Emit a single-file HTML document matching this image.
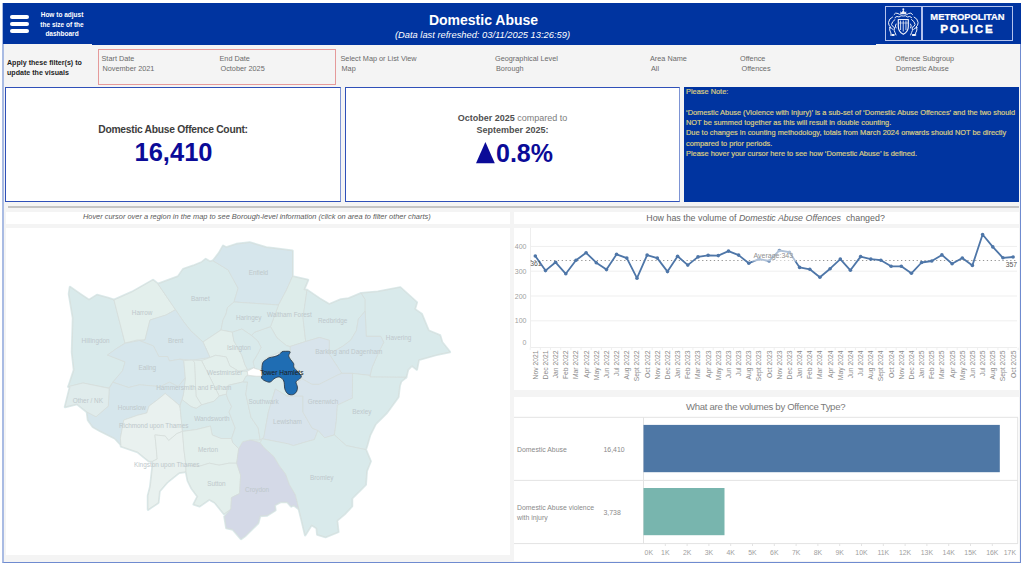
<!DOCTYPE html>
<html><head><meta charset="utf-8">
<style>
*{margin:0;padding:0;box-sizing:border-box}
html,body{width:1023px;height:565px;overflow:hidden;background:#fff;font-family:"Liberation Sans",sans-serif}
.a{position:absolute}
#frame{left:2px;top:3px;width:1019px;height:560.2px;background:#f4f4f4;border-left:2px solid #a9bbe3;border-right:1px solid #6f8bd0;border-bottom:1.5px solid #6f8bd0}
#hdr{left:3px;top:3px;width:1018px;height:41px;background:#0034a0}
.w{color:#fff}
.t{white-space:nowrap}
.fl{font-size:7.3px;color:#6b6b6b}
.nt{left:686px;font-size:7.4px;color:#dacd84;line-height:10px;-webkit-text-stroke:0.2px #dacd84}
.box{background:#fff;border:1px solid #2f50b8;border-right-color:#7d94d4}
</style></head><body>
<div class="a" id="frame"></div>
<div class="a" id="hdr"></div>
<div class="a" style="left:91.5px;top:43.9px;width:784px;height:0.9px;background:#0034a0"></div>
<!-- hamburger -->
<div class="a" style="left:10px;top:15px;width:19px;height:3.6px;background:#fff;border-radius:2px"></div>
<div class="a" style="left:10px;top:22px;width:19px;height:3.6px;background:#fff;border-radius:2px"></div>
<div class="a" style="left:10px;top:29.3px;width:19px;height:3.6px;background:#fff;border-radius:2px"></div>
<div class="a w" style="left:36px;top:10.3px;width:52px;font-size:6.5px;font-weight:bold;line-height:9.5px;text-align:center">How to adjust<br>the size of the<br>dashboard</div>
<div class="a w t" style="left:383.5px;top:12px;width:200px;text-align:center;font-size:14px;font-weight:bold">Domestic Abuse</div>
<div class="a w t" style="left:382.5px;top:30.3px;width:200px;text-align:center;font-size:9.33px;font-style:italic">(Data last refreshed: 03/11/2025 13:26:59)</div>
<!-- logo -->
<div class="a" style="left:885px;top:6px;width:36.5px;height:34.5px;border:1.3px solid #b4c2ec"></div>
<div class="a" style="left:921.5px;top:6px;width:91.5px;height:34.5px;border:1.3px solid #b4c2ec"></div>
<svg class="a" style="left:880px;top:0" width="45" height="45" viewBox="880 0 45 45">
<g fill="none" stroke="#eef1fa" stroke-width="1" stroke-linecap="round" stroke-linejoin="round">
<path d="M894,14.5 q1.5,-2.5 4,-1 q1,1.5 3,0.5 M912.6,14.5 q-1.5,-2.5 -4,-1 q-1,1.5 -3,0.5"/>
<path d="M895,17.5 q2,-2 4,-0.5 q2,-2 4.3,-1 q2.3,-1 4.3,1 q2,-1.5 4,0.5"/>
<path d="M898.3,19.5 h10 v7 q0,5.2 -5,7.8 q-5,-2.6 -5,-7.8 z" stroke-width="1.2"/>
<path d="M892.5,17 q-3.5,1.5 -4,5.5 q0,3 2,4.5 q-1.5,2 -0.5,4 q1.5,1.5 1,4.5"/>
<path d="M895,19.5 q-3,2 -3.5,5 q1,2.5 3,3 q-1,3 0.5,5 l1,2.5"/>
<path d="M889.5,27.5 q2.5,0 3.5,2 M896,24 q-1.5,2 0,4"/>
<path d="M914.1,17 q3.5,1.5 4,5.5 q0,3 -2,4.5 q1.5,2 0.5,4 q-1.5,1.5 -1,4.5"/>
<path d="M911.6,19.5 q3,2 3.5,5 q-1,2.5 -3,3 q1,3 -0.5,5 l-1,2.5"/>
<path d="M917.1,27.5 q-2.5,0 -3.5,2 M910.6,24 q1.5,2 0,4"/>
</g>
<g fill="#eef1fa">
<path d="M900.6,14.2 l-0.3,-3 l1.4,1.2 l1.6,-2.8 l1.6,2.8 l1.4,-1.2 l-0.3,3 z"/>
<circle cx="903.3" cy="9.3" r="1"/>
<rect x="900" y="20.5" width="1.1" height="9.5" fill-opacity="0.8"/><rect x="902.7" y="20.5" width="1.1" height="11" fill-opacity="0.8"/><rect x="905.4" y="20.5" width="1.1" height="9.5" fill-opacity="0.8"/>
<rect x="898.5" y="22.5" width="9.6" height="1" fill-opacity="0.6"/>
<rect x="891.5" y="34" width="3" height="2"/><rect x="912.1" y="34" width="3" height="2"/>
</g></svg>
<div class="a w t" style="left:923px;top:11px;width:89px;text-align:center;font-size:9.4px;font-weight:bold;-webkit-text-stroke:0.2px #fff">METROPOLITAN</div>
<div class="a w t" style="left:922px;top:21.8px;width:89px;text-align:center;font-size:11.6px;font-weight:bold;letter-spacing:1.9px;text-indent:1.9px;-webkit-text-stroke:0.35px #fff">POLICE</div>

<!-- filters -->
<div class="a t" style="left:7px;top:58.2px;font-size:7.1px;font-weight:bold;line-height:10.2px;color:#1e1e1e">Apply these filter(s) to<br>update the visuals</div>
<div class="a" style="left:98px;top:49px;width:238px;height:36px;border:1px solid #e59a9a"></div>
<div class="a fl t" style="left:101.5px;top:54px">Start Date</div>
<div class="a fl t" style="left:102.5px;top:64px">November 2021</div>
<div class="a fl t" style="left:219.5px;top:54px">End Date</div>
<div class="a fl t" style="left:220.5px;top:64px">October 2025</div>
<div class="a fl t" style="left:340.5px;top:54px">Select Map or List View</div>
<div class="a fl t" style="left:341.5px;top:64px">Map</div>
<div class="a fl t" style="left:495px;top:54px">Geographical Level</div>
<div class="a fl t" style="left:496px;top:64px">Borough</div>
<div class="a fl t" style="left:650px;top:54px">Area Name</div>
<div class="a fl t" style="left:651px;top:64px">All</div>
<div class="a fl t" style="left:740px;top:54px">Offence</div>
<div class="a fl t" style="left:741.5px;top:64px">Offences</div>
<div class="a fl t" style="left:895px;top:54px">Offence Subgroup</div>
<div class="a fl t" style="left:896px;top:64px">Domestic Abuse</div>

<!-- KPI boxes -->
<div class="a box" style="left:5px;top:87px;width:336px;height:115px"></div>
<div class="a box" style="left:345px;top:87px;width:335px;height:115px"></div>
<div class="a" style="left:684px;top:87px;width:335px;height:115px;background:#0034a0"></div>

<div class="a t" style="left:5px;top:123.5px;width:336px;text-align:center;font-size:10.3px;font-weight:bold;letter-spacing:-0.28px;color:#3d3d3d">Domestic Abuse Offence Count:</div>
<div class="a t" style="left:5.5px;top:137.5px;width:336px;text-align:center;font-size:25.5px;font-weight:bold;color:#0b0b98">16,410</div>

<div class="a t" style="left:345px;top:111.7px;width:335px;text-align:center;font-size:9px;color:#505050;line-height:12.6px"><b>October 2025</b> <span style="color:#7c7c7c">compared to</span><br><b>September 2025:</b></div>
<svg class="a" style="left:0;top:0" width="600" height="200"><polygon points="476,163.3 485.4,142 494.8,163.3" fill="#0b0b98"/></svg><div class="a t" style="left:496px;top:138.5px;font-size:25px;font-weight:bold;color:#0b0b98">0.8%</div>

<div class="a t nt" style="top:87.30px">Please Note:</div>
<div class="a t nt" style="top:107.80px">‘Domestic Abuse (Violence with Injury)’ is a sub-set of ‘Domestic Abuse Offences’ and the two should</div>
<div class="a t nt" style="top:118.05px">NOT be summed together as this will result in double counting.</div>
<div class="a t nt" style="top:128.30px">Due to changes in counting methodology, totals from March 2024 onwards should NOT be directly</div>
<div class="a t nt" style="top:138.55px">compared to prior periods.</div>
<div class="a t nt" style="top:148.80px">Please hover your cursor here to see how ‘Domestic Abuse’ is defined.</div>

<!-- separator -->
<div class="a" style="left:8px;top:206px;width:1011px;height:1.5px;background:#c4c4c4"></div>

<!-- map panel -->
<div class="a" style="left:6px;top:212px;width:504px;height:12px;background:#fff"></div>
<div class="a t" style="left:4.8px;top:212.3px;width:504px;text-align:center;font-size:7.43px;font-style:italic;color:#5a5a5a">Hover cursor over a region in the map to see Borough-level information (click on area to filter other charts)</div>
<div class="a" style="left:6px;top:228px;width:504px;height:327px;background:#fff"></div>

<!-- line chart panel -->
<div class="a" style="left:514px;top:212px;width:505px;height:12px;background:#fff"></div>
<div class="a t" style="left:646.3px;top:213px;font-size:8.87px;color:#666">How has the volume of <i>Domestic Abuse Offences</i>&nbsp; changed?</div>
<div class="a" style="left:514px;top:228px;width:505px;height:162.3px;background:#fff"></div>

<!-- bar chart panel -->
<div class="a" style="left:514px;top:397px;width:505px;height:163.5px;background:#fff"></div>

<svg class="a" style="left:0;top:0" width="1023" height="565" viewBox="0 0 1023 565" font-family="Liberation Sans, sans-serif"><polygon points="70.0,287.0 80.0,294.0 89.0,300.0 97.0,295.0 108.0,298.0 114.0,300.0 125.0,343.0 116.0,349.0 107.5,355.0 125.0,362.0 122.5,371.0 113.0,382.0 109.0,388.0 83.0,383.0 68.5,386.6 74.0,370.0 72.0,352.0 73.0,318.0 69.0,294.0" fill="#dbeaeb" stroke="#dbeaeb" stroke-width="2.5" stroke-linejoin="round"/><polygon points="114.0,300.0 132.0,292.0 153.0,280.0 158.0,284.0 175.5,309.7 166.0,315.0 150.0,320.0 145.0,340.0 137.0,340.0 125.0,343.0" fill="#dbeaeb" stroke="#dbeaeb" stroke-width="2.5" stroke-linejoin="round"/><polygon points="158.0,284.0 178.2,276.5 183.2,269.1 193.2,265.8 201.5,262.4 205.6,259.1 209.8,261.6 213.1,260.8 228.1,269.9 238.1,288.2 234.0,302.0 227.5,307.5 226.0,314.0 223.0,320.0 221.0,330.0 203.0,342.0 191.0,331.0 183.5,321.6 175.5,309.7" fill="#dbeaeb" stroke="#dbeaeb" stroke-width="2.5" stroke-linejoin="round"/><polygon points="213.1,260.8 219.0,253.0 223.1,245.8 226.4,247.5 236.4,244.1 249.7,242.5 266.3,247.5 273.0,248.3 292.5,250.8 292.5,276.5 286.5,290.0 278.5,305.0 234.0,302.0 238.1,288.2 228.1,269.9" fill="#dbeaeb" stroke="#dbeaeb" stroke-width="2.5" stroke-linejoin="round"/><polygon points="292.5,276.5 308.0,280.0 303.9,289.7 307.0,290.0 303.0,317.6 305.7,341.5 290.0,346.5 286.5,345.7 276.9,337.8 270.5,326.6 278.5,305.0 286.5,290.0" fill="#dbeaeb" stroke="#dbeaeb" stroke-width="2.5" stroke-linejoin="round"/><polygon points="307.0,290.0 319.5,298.5 329.2,304.3 340.9,299.5 348.7,298.5 361.3,293.2 365.2,299.5 365.2,311.1 358.4,318.9 356.4,330.6 350.6,340.3 342.8,346.2 329.2,354.0 329.2,340.3 319.5,337.4 305.7,341.5 303.0,317.6" fill="#dbeaeb" stroke="#dbeaeb" stroke-width="2.5" stroke-linejoin="round"/><polygon points="361.3,293.2 377.9,291.7 400.2,287.4 416.8,302.4 414.8,309.2 421.7,314.1 428.5,330.6 440.1,335.5 442.1,342.3 449.9,352.0 440.1,354.0 436.3,354.9 418.7,359.8 416.8,369.5 411.9,365.6 408.0,369.5 406.1,377.3 370.1,377.0 370.1,375.4 372.0,367.6 377.9,354.0 383.7,342.3 380.8,336.4 366.2,336.4 365.2,311.1 365.2,299.5" fill="#dbeaeb" stroke="#dbeaeb" stroke-width="2.5" stroke-linejoin="round"/><polygon points="329.2,354.0 342.8,346.2 350.6,340.3 356.4,330.6 358.4,318.9 365.2,311.1 366.2,336.4 380.8,336.4 383.7,342.3 377.9,354.0 372.0,367.6 370.1,375.4 352.6,373.4 341.8,373.4" fill="#dbeaeb" stroke="#dbeaeb" stroke-width="2.5" stroke-linejoin="round"/><polygon points="290.0,346.5 305.7,341.5 319.5,337.4 329.2,340.3 329.2,354.0 341.8,373.4 337.4,375.2 319.0,384.4 312.0,384.4 301.8,378.7 301.8,372.9 293.7,366.0 292.6,360.3 289.1,356.8 290.3,351.5" fill="#dbeaeb" stroke="#dbeaeb" stroke-width="2.5" stroke-linejoin="round"/><polygon points="270.5,326.6 276.9,337.8 286.5,345.7 290.0,346.5 290.3,351.5 282.2,351.1 268.4,356.8 261.5,361.4 261.5,368.5 259.8,370.2 252.9,367.7 253.0,361.7 257.8,353.7 261.0,347.3 257.8,341.0 251.4,335.4 254.6,332.2" fill="#dbeaeb" stroke="#dbeaeb" stroke-width="2.5" stroke-linejoin="round"/><polygon points="234.0,302.0 278.5,305.0 270.5,326.6 254.6,332.2 251.4,335.4 241.9,329.0 232.3,332.2 221.0,330.0 223.0,320.0 226.0,314.0 227.5,307.5" fill="#dbeaeb" stroke="#dbeaeb" stroke-width="2.5" stroke-linejoin="round"/><polygon points="203.0,342.0 221.0,330.0 232.3,332.2 233.9,341.0 241.9,355.3 245.0,364.8 247.5,369.6 238.7,371.2 229.9,366.0 226.3,357.0 215.7,355.3 210.0,357.5" fill="#dbeaeb" stroke="#dbeaeb" stroke-width="2.5" stroke-linejoin="round"/><polygon points="232.3,332.2 241.9,329.0 251.4,335.4 257.8,341.0 261.0,347.3 257.8,353.7 253.0,361.7 254.6,368.0 252.9,367.7 247.5,369.6 245.0,364.8 241.9,355.3 233.9,341.0" fill="#dbeaeb" stroke="#dbeaeb" stroke-width="2.5" stroke-linejoin="round"/><polygon points="175.5,309.7 183.5,321.6 191.0,331.0 203.0,342.0 210.0,357.5 192.4,360.1 180.0,359.2 169.4,361.0 167.6,356.5 158.8,356.5 153.4,345.9 139.3,340.6 145.0,340.0 150.0,320.0 166.0,315.0" fill="#dbeaeb" stroke="#dbeaeb" stroke-width="2.5" stroke-linejoin="round"/><polygon points="107.5,355.0 116.3,348.6 125.1,343.3 139.3,340.6 153.4,345.9 158.8,356.5 167.6,356.5 169.4,361.0 180.0,359.2 183.8,360.6 185.3,377.8 178.2,386.6 169.4,382.2 160.5,386.6 139.3,384.8 128.7,387.5 112.8,382.2 122.5,370.7 125.1,361.8" fill="#dbeaeb" stroke="#dbeaeb" stroke-width="2.5" stroke-linejoin="round"/><polygon points="201.5,360.6 210.0,357.5 215.7,355.3 226.3,357.0 229.9,366.0 238.7,371.2 247.3,371.3 247.8,375.2 245.8,376.5 243.1,381.9 228.1,385.4 226.3,394.2 219.2,396.0 212.2,381.9" fill="#dbeaeb" stroke="#dbeaeb" stroke-width="2.5" stroke-linejoin="round"/><polygon points="192.4,360.1 201.5,360.6 212.2,381.9 219.2,396.0 214.0,401.3 201.5,404.9 196.0,396.0 194.5,362.4" fill="#dbeaeb" stroke="#dbeaeb" stroke-width="2.5" stroke-linejoin="round"/><polygon points="183.8,360.6 192.4,360.1 194.5,362.4 196.0,396.0 201.5,404.9 196.2,408.4 191.0,406.6 182.0,399.6 183.5,393.7 185.3,377.8" fill="#dbeaeb" stroke="#dbeaeb" stroke-width="2.5" stroke-linejoin="round"/><polygon points="112.8,382.2 128.7,387.5 139.3,384.8 160.5,386.6 169.4,382.2 178.2,386.6 185.3,377.8 183.5,393.7 182.0,399.6 180.3,404.9 179.0,405.0 172.1,399.2 165.2,393.5 158.3,399.2 149.1,406.1 146.8,413.0 137.6,415.3 123.8,420.0 120.4,438.3 121.0,445.0 115.0,438.5 108.0,435.0 100.0,431.0 93.0,427.0 88.0,420.0 87.0,412.0 96.0,416.7 108.3,406.1 109.2,388.4" fill="#dbeaeb" stroke="#dbeaeb" stroke-width="2.5" stroke-linejoin="round"/><polygon points="68.5,386.6 83.0,383.0 109.2,388.4 108.3,406.1 96.0,416.7 87.0,412.0 77.0,404.0 65.0,407.0 70.0,387.0" fill="#dbeaeb" stroke="#dbeaeb" stroke-width="2.5" stroke-linejoin="round"/><polygon points="165.2,393.5 172.1,399.2 179.0,405.0 180.2,408.4 182.5,431.4 176.7,433.7 168.7,440.6 165.2,436.0 154.9,434.9 156.0,445.2 157.2,459.0 152.6,461.3 149.0,461.3 137.6,452.0 121.0,446.4 120.4,438.3 123.8,420.0 137.6,415.3 146.8,413.0 149.1,406.1 158.3,399.2" fill="#dbeaeb" stroke="#dbeaeb" stroke-width="2.5" stroke-linejoin="round"/><polygon points="154.9,434.9 165.2,436.0 168.7,440.6 176.7,433.7 182.5,431.4 183.9,449.6 185.9,465.2 186.0,471.7 179.0,472.8 167.5,482.0 159.5,491.2 158.3,502.7 148.0,509.6 148.0,495.8 150.3,486.6 152.6,466.0 152.6,461.3 157.2,459.0 156.0,445.2" fill="#dbeaeb" stroke="#dbeaeb" stroke-width="2.5" stroke-linejoin="round"/><polygon points="180.3,404.9 182.0,399.6 191.0,406.6 196.2,408.4 201.5,404.9 214.0,401.3 219.2,396.0 226.3,394.2 228.1,399.6 231.6,406.6 229.0,412.0 235.2,427.9 231.6,438.5 221.0,438.5 212.2,435.0 210.4,426.1 196.2,429.6 182.5,431.4 180.2,408.4" fill="#dbeaeb" stroke="#dbeaeb" stroke-width="2.5" stroke-linejoin="round"/><polygon points="182.5,431.4 196.2,429.6 210.4,426.1 212.2,435.0 221.0,438.5 231.6,438.5 232.8,442.7 238.7,448.6 236.7,463.2 228.9,463.2 219.1,465.2 209.3,463.2 199.6,466.2 185.9,465.2 183.9,449.6" fill="#dbeaeb" stroke="#dbeaeb" stroke-width="2.5" stroke-linejoin="round"/><polygon points="185.9,465.2 199.6,466.2 209.3,463.2 219.1,465.2 228.9,463.2 236.7,463.2 240.6,475.0 239.6,493.5 231.5,497.6 230.9,509.1 224.0,514.0 215.0,502.7 209.3,499.4 199.6,506.2 193.7,504.3 197.6,496.5 191.7,488.6 187.8,480.8 186.0,471.7" fill="#dbeaeb" stroke="#dbeaeb" stroke-width="2.5" stroke-linejoin="round"/><polygon points="238.7,448.6 242.6,441.7 250.4,439.8 260.2,442.7 264.1,447.6 273.8,456.4 279.7,466.2 285.6,474.0 289.5,484.7 295.3,494.5 298.9,509.1 293.8,505.2 291.2,506.5 287.4,502.1 280.4,502.1 274.7,505.2 275.4,510.3 267.1,515.4 260.1,516.0 258.2,523.0 245.5,535.7 241.0,538.9 232.8,529.4 226.4,528.1 224.5,516.7 230.9,509.1 231.5,497.6 239.6,493.5 240.6,475.0 236.7,463.2" fill="#dbeaeb" stroke="#dbeaeb" stroke-width="2.5" stroke-linejoin="round"/><polygon points="243.1,381.9 247.6,381.9 245.8,394.2 251.0,417.3 258.2,427.9 260.2,440.0 250.4,439.8 242.6,441.7 238.7,448.6 232.8,442.7 231.6,438.5 235.2,427.9 229.0,412.0 231.6,406.6 228.1,399.6 226.3,394.2 228.1,385.4" fill="#dbeaeb" stroke="#dbeaeb" stroke-width="2.5" stroke-linejoin="round"/><polygon points="247.6,375.7 261.7,376.5 263.8,379.4 270.0,377.0 280.0,375.5 284.5,383.3 285.7,390.2 289.1,394.1 286.8,396.0 275.3,389.0 268.4,412.0 263.8,437.3 260.2,440.0 258.2,427.9 251.0,417.3 245.8,394.2 247.6,381.9 243.1,381.9 245.8,376.5" fill="#dbeaeb" stroke="#dbeaeb" stroke-width="2.5" stroke-linejoin="round"/><polygon points="275.3,389.0 286.8,396.0 302.9,396.0 302.9,412.0 312.1,428.1 317.9,430.4 314.4,439.6 309.0,441.0 293.4,445.6 287.5,443.7 262.1,438.8 263.8,437.3 268.4,412.0" fill="#dbeaeb" stroke="#dbeaeb" stroke-width="2.5" stroke-linejoin="round"/><polygon points="297.2,383.3 301.8,378.7 312.1,384.4 319.0,384.4 337.4,375.2 341.8,373.4 352.6,373.4 352.4,398.2 337.4,405.1 336.3,421.2 334.4,434.9 324.7,437.8 317.9,430.4 312.1,428.1 302.9,412.0 302.9,396.0 286.8,396.0 289.1,394.1 294.9,394.1 298.3,390.2" fill="#dbeaeb" stroke="#dbeaeb" stroke-width="2.5" stroke-linejoin="round"/><polygon points="352.6,373.4 370.1,375.4 370.1,377.0 406.1,377.3 401.2,381.2 399.7,385.6 398.3,396.9 387.0,412.5 375.7,423.8 370.0,435.1 367.2,445.0 365.7,449.6 346.2,445.6 334.4,434.9 336.3,421.2 337.4,405.1 352.4,398.2" fill="#dbeaeb" stroke="#dbeaeb" stroke-width="2.5" stroke-linejoin="round"/><polygon points="262.1,438.8 287.5,443.7 293.4,445.6 309.0,441.0 314.4,439.6 317.9,430.4 324.7,437.8 334.4,434.9 346.2,445.6 365.7,449.6 370.6,461.3 366.7,471.1 365.7,484.7 352.0,498.4 352.0,506.2 344.6,514.1 337.0,520.5 338.3,531.9 325.5,537.0 317.3,534.5 316.7,528.1 311.6,524.9 305.2,535.1 301.4,519.2 298.9,509.1 295.3,494.5 289.5,484.7 285.6,474.0 279.7,466.2 273.8,456.4 264.1,447.6 260.2,442.7" fill="#dbeaeb" stroke="#dbeaeb" stroke-width="2.5" stroke-linejoin="round"/><polygon points="70.0,287.0 80.0,294.0 89.0,300.0 97.0,295.0 108.0,298.0 114.0,300.0 125.0,343.0 116.0,349.0 107.5,355.0 125.0,362.0 122.5,371.0 113.0,382.0 109.0,388.0 83.0,383.0 68.5,386.6 74.0,370.0 72.0,352.0 73.0,318.0 69.0,294.0" fill="#d9eaeb" stroke="#d6dcda" stroke-width="0.7" stroke-linejoin="round"/><polygon points="114.0,300.0 132.0,292.0 153.0,280.0 158.0,284.0 175.5,309.7 166.0,315.0 150.0,320.0 145.0,340.0 137.0,340.0 125.0,343.0" fill="#e3efec" stroke="#d6dcda" stroke-width="0.7" stroke-linejoin="round"/><polygon points="158.0,284.0 178.2,276.5 183.2,269.1 193.2,265.8 201.5,262.4 205.6,259.1 209.8,261.6 213.1,260.8 228.1,269.9 238.1,288.2 234.0,302.0 227.5,307.5 226.0,314.0 223.0,320.0 221.0,330.0 203.0,342.0 191.0,331.0 183.5,321.6 175.5,309.7" fill="#d9eaeb" stroke="#d6dcda" stroke-width="0.7" stroke-linejoin="round"/><polygon points="213.1,260.8 219.0,253.0 223.1,245.8 226.4,247.5 236.4,244.1 249.7,242.5 266.3,247.5 273.0,248.3 292.5,250.8 292.5,276.5 286.5,290.0 278.5,305.0 234.0,302.0 238.1,288.2 228.1,269.9" fill="#d6e6ec" stroke="#d6dcda" stroke-width="0.7" stroke-linejoin="round"/><polygon points="292.5,276.5 308.0,280.0 303.9,289.7 307.0,290.0 303.0,317.6 305.7,341.5 290.0,346.5 286.5,345.7 276.9,337.8 270.5,326.6 278.5,305.0 286.5,290.0" fill="#ddecea" stroke="#d6dcda" stroke-width="0.7" stroke-linejoin="round"/><polygon points="307.0,290.0 319.5,298.5 329.2,304.3 340.9,299.5 348.7,298.5 361.3,293.2 365.2,299.5 365.2,311.1 358.4,318.9 356.4,330.6 350.6,340.3 342.8,346.2 329.2,354.0 329.2,340.3 319.5,337.4 305.7,341.5 303.0,317.6" fill="#d9eaeb" stroke="#d6dcda" stroke-width="0.7" stroke-linejoin="round"/><polygon points="361.3,293.2 377.9,291.7 400.2,287.4 416.8,302.4 414.8,309.2 421.7,314.1 428.5,330.6 440.1,335.5 442.1,342.3 449.9,352.0 440.1,354.0 436.3,354.9 418.7,359.8 416.8,369.5 411.9,365.6 408.0,369.5 406.1,377.3 370.1,377.0 370.1,375.4 372.0,367.6 377.9,354.0 383.7,342.3 380.8,336.4 366.2,336.4 365.2,311.1 365.2,299.5" fill="#d9eaeb" stroke="#d6dcda" stroke-width="0.7" stroke-linejoin="round"/><polygon points="329.2,354.0 342.8,346.2 350.6,340.3 356.4,330.6 358.4,318.9 365.2,311.1 366.2,336.4 380.8,336.4 383.7,342.3 377.9,354.0 372.0,367.6 370.1,375.4 352.6,373.4 341.8,373.4" fill="#d6e6ec" stroke="#d6dcda" stroke-width="0.7" stroke-linejoin="round"/><polygon points="290.0,346.5 305.7,341.5 319.5,337.4 329.2,340.3 329.2,354.0 341.8,373.4 337.4,375.2 319.0,384.4 312.0,384.4 301.8,378.7 301.8,372.9 293.7,366.0 292.6,360.3 289.1,356.8 290.3,351.5" fill="#d8e4ec" stroke="#d6dcda" stroke-width="0.7" stroke-linejoin="round"/><polygon points="270.5,326.6 276.9,337.8 286.5,345.7 290.0,346.5 290.3,351.5 282.2,351.1 268.4,356.8 261.5,361.4 261.5,368.5 259.8,370.2 252.9,367.7 253.0,361.7 257.8,353.7 261.0,347.3 257.8,341.0 251.4,335.4 254.6,332.2" fill="#d9eaeb" stroke="#d6dcda" stroke-width="0.7" stroke-linejoin="round"/><polygon points="234.0,302.0 278.5,305.0 270.5,326.6 254.6,332.2 251.4,335.4 241.9,329.0 232.3,332.2 221.0,330.0 223.0,320.0 226.0,314.0 227.5,307.5" fill="#d9eaeb" stroke="#d6dcda" stroke-width="0.7" stroke-linejoin="round"/><polygon points="203.0,342.0 221.0,330.0 232.3,332.2 233.9,341.0 241.9,355.3 245.0,364.8 247.5,369.6 238.7,371.2 229.9,366.0 226.3,357.0 215.7,355.3 210.0,357.5" fill="#e3efec" stroke="#d6dcda" stroke-width="0.7" stroke-linejoin="round"/><polygon points="232.3,332.2 241.9,329.0 251.4,335.4 257.8,341.0 261.0,347.3 257.8,353.7 253.0,361.7 254.6,368.0 252.9,367.7 247.5,369.6 245.0,364.8 241.9,355.3 233.9,341.0" fill="#d9eaeb" stroke="#d6dcda" stroke-width="0.7" stroke-linejoin="round"/><polygon points="175.5,309.7 183.5,321.6 191.0,331.0 203.0,342.0 210.0,357.5 192.4,360.1 180.0,359.2 169.4,361.0 167.6,356.5 158.8,356.5 153.4,345.9 139.3,340.6 145.0,340.0 150.0,320.0 166.0,315.0" fill="#d6e6ec" stroke="#d6dcda" stroke-width="0.7" stroke-linejoin="round"/><polygon points="107.5,355.0 116.3,348.6 125.1,343.3 139.3,340.6 153.4,345.9 158.8,356.5 167.6,356.5 169.4,361.0 180.0,359.2 183.8,360.6 185.3,377.8 178.2,386.6 169.4,382.2 160.5,386.6 139.3,384.8 128.7,387.5 112.8,382.2 122.5,370.7 125.1,361.8" fill="#d6e6ec" stroke="#d6dcda" stroke-width="0.7" stroke-linejoin="round"/><polygon points="201.5,360.6 210.0,357.5 215.7,355.3 226.3,357.0 229.9,366.0 238.7,371.2 247.3,371.3 247.8,375.2 245.8,376.5 243.1,381.9 228.1,385.4 226.3,394.2 219.2,396.0 212.2,381.9" fill="#e3efec" stroke="#d6dcda" stroke-width="0.7" stroke-linejoin="round"/><polygon points="192.4,360.1 201.5,360.6 212.2,381.9 219.2,396.0 214.0,401.3 201.5,404.9 196.0,396.0 194.5,362.4" fill="#e3efec" stroke="#d6dcda" stroke-width="0.7" stroke-linejoin="round"/><polygon points="183.8,360.6 192.4,360.1 194.5,362.4 196.0,396.0 201.5,404.9 196.2,408.4 191.0,406.6 182.0,399.6 183.5,393.7 185.3,377.8" fill="#e3efec" stroke="#d6dcda" stroke-width="0.7" stroke-linejoin="round"/><polygon points="112.8,382.2 128.7,387.5 139.3,384.8 160.5,386.6 169.4,382.2 178.2,386.6 185.3,377.8 183.5,393.7 182.0,399.6 180.3,404.9 179.0,405.0 172.1,399.2 165.2,393.5 158.3,399.2 149.1,406.1 146.8,413.0 137.6,415.3 123.8,420.0 120.4,438.3 121.0,445.0 115.0,438.5 108.0,435.0 100.0,431.0 93.0,427.0 88.0,420.0 87.0,412.0 96.0,416.7 108.3,406.1 109.2,388.4" fill="#d6e6ec" stroke="#d6dcda" stroke-width="0.7" stroke-linejoin="round"/><polygon points="68.5,386.6 83.0,383.0 109.2,388.4 108.3,406.1 96.0,416.7 87.0,412.0 77.0,404.0 65.0,407.0 70.0,387.0" fill="#e0ecec" stroke="#d6dcda" stroke-width="0.7" stroke-linejoin="round"/><polygon points="165.2,393.5 172.1,399.2 179.0,405.0 180.2,408.4 182.5,431.4 176.7,433.7 168.7,440.6 165.2,436.0 154.9,434.9 156.0,445.2 157.2,459.0 152.6,461.3 149.0,461.3 137.6,452.0 121.0,446.4 120.4,438.3 123.8,420.0 137.6,415.3 146.8,413.0 149.1,406.1 158.3,399.2" fill="#e9f1ef" stroke="#d6dcda" stroke-width="0.7" stroke-linejoin="round"/><polygon points="154.9,434.9 165.2,436.0 168.7,440.6 176.7,433.7 182.5,431.4 183.9,449.6 185.9,465.2 186.0,471.7 179.0,472.8 167.5,482.0 159.5,491.2 158.3,502.7 148.0,509.6 148.0,495.8 150.3,486.6 152.6,466.0 152.6,461.3 157.2,459.0 156.0,445.2" fill="#e9f1ef" stroke="#d6dcda" stroke-width="0.7" stroke-linejoin="round"/><polygon points="180.3,404.9 182.0,399.6 191.0,406.6 196.2,408.4 201.5,404.9 214.0,401.3 219.2,396.0 226.3,394.2 228.1,399.6 231.6,406.6 229.0,412.0 235.2,427.9 231.6,438.5 221.0,438.5 212.2,435.0 210.4,426.1 196.2,429.6 182.5,431.4 180.2,408.4" fill="#d9eaeb" stroke="#d6dcda" stroke-width="0.7" stroke-linejoin="round"/><polygon points="182.5,431.4 196.2,429.6 210.4,426.1 212.2,435.0 221.0,438.5 231.6,438.5 232.8,442.7 238.7,448.6 236.7,463.2 228.9,463.2 219.1,465.2 209.3,463.2 199.6,466.2 185.9,465.2 183.9,449.6" fill="#e3efec" stroke="#d6dcda" stroke-width="0.7" stroke-linejoin="round"/><polygon points="185.9,465.2 199.6,466.2 209.3,463.2 219.1,465.2 228.9,463.2 236.7,463.2 240.6,475.0 239.6,493.5 231.5,497.6 230.9,509.1 224.0,514.0 215.0,502.7 209.3,499.4 199.6,506.2 193.7,504.3 197.6,496.5 191.7,488.6 187.8,480.8 186.0,471.7" fill="#e3efec" stroke="#d6dcda" stroke-width="0.7" stroke-linejoin="round"/><polygon points="238.7,448.6 242.6,441.7 250.4,439.8 260.2,442.7 264.1,447.6 273.8,456.4 279.7,466.2 285.6,474.0 289.5,484.7 295.3,494.5 298.9,509.1 293.8,505.2 291.2,506.5 287.4,502.1 280.4,502.1 274.7,505.2 275.4,510.3 267.1,515.4 260.1,516.0 258.2,523.0 245.5,535.7 241.0,538.9 232.8,529.4 226.4,528.1 224.5,516.7 230.9,509.1 231.5,497.6 239.6,493.5 240.6,475.0 236.7,463.2" fill="#d4d9e7" stroke="#d6dcda" stroke-width="0.7" stroke-linejoin="round"/><polygon points="243.1,381.9 247.6,381.9 245.8,394.2 251.0,417.3 258.2,427.9 260.2,440.0 250.4,439.8 242.6,441.7 238.7,448.6 232.8,442.7 231.6,438.5 235.2,427.9 229.0,412.0 231.6,406.6 228.1,399.6 226.3,394.2 228.1,385.4" fill="#d9eaeb" stroke="#d6dcda" stroke-width="0.7" stroke-linejoin="round"/><polygon points="247.6,375.7 261.7,376.5 263.8,379.4 270.0,377.0 280.0,375.5 284.5,383.3 285.7,390.2 289.1,394.1 286.8,396.0 275.3,389.0 268.4,412.0 263.8,437.3 260.2,440.0 258.2,427.9 251.0,417.3 245.8,394.2 247.6,381.9 243.1,381.9 245.8,376.5" fill="#d9eaeb" stroke="#d6dcda" stroke-width="0.7" stroke-linejoin="round"/><polygon points="275.3,389.0 286.8,396.0 302.9,396.0 302.9,412.0 312.1,428.1 317.9,430.4 314.4,439.6 309.0,441.0 293.4,445.6 287.5,443.7 262.1,438.8 263.8,437.3 268.4,412.0" fill="#d8e4ec" stroke="#d6dcda" stroke-width="0.7" stroke-linejoin="round"/><polygon points="297.2,383.3 301.8,378.7 312.1,384.4 319.0,384.4 337.4,375.2 341.8,373.4 352.6,373.4 352.4,398.2 337.4,405.1 336.3,421.2 334.4,434.9 324.7,437.8 317.9,430.4 312.1,428.1 302.9,412.0 302.9,396.0 286.8,396.0 289.1,394.1 294.9,394.1 298.3,390.2" fill="#d8e4ec" stroke="#d6dcda" stroke-width="0.7" stroke-linejoin="round"/><polygon points="352.6,373.4 370.1,375.4 370.1,377.0 406.1,377.3 401.2,381.2 399.7,385.6 398.3,396.9 387.0,412.5 375.7,423.8 370.0,435.1 367.2,445.0 365.7,449.6 346.2,445.6 334.4,434.9 336.3,421.2 337.4,405.1 352.4,398.2" fill="#d9eaeb" stroke="#d6dcda" stroke-width="0.7" stroke-linejoin="round"/><polygon points="262.1,438.8 287.5,443.7 293.4,445.6 309.0,441.0 314.4,439.6 317.9,430.4 324.7,437.8 334.4,434.9 346.2,445.6 365.7,449.6 370.6,461.3 366.7,471.1 365.7,484.7 352.0,498.4 352.0,506.2 344.6,514.1 337.0,520.5 338.3,531.9 325.5,537.0 317.3,534.5 316.7,528.1 311.6,524.9 305.2,535.1 301.4,519.2 298.9,509.1 295.3,494.5 289.5,484.7 285.6,474.0 279.7,466.2 273.8,456.4 264.1,447.6 260.2,442.7" fill="#d9eaeb" stroke="#d6dcda" stroke-width="0.7" stroke-linejoin="round"/><polygon points="247.3,371.3 253.6,367.9 256.1,368.9 261.0,369.8 262.0,376.2 256.1,376.2 247.8,375.2" fill="#ffffff" stroke="#d6dcda" stroke-width="0.7" stroke-linejoin="round"/><text x="258.4" y="274.59999999999997" text-anchor="middle" font-size="6.4" fill="#bec8cb">Enfield</text><text x="200.3" y="301.0" text-anchor="middle" font-size="6.4" fill="#bec8cb">Barnet</text><text x="142.1" y="314.59999999999997" text-anchor="middle" font-size="6.4" fill="#bec8cb">Harrow</text><text x="248.7" y="320.4" text-anchor="middle" font-size="6.4" fill="#bec8cb">Haringey</text><text x="289.4" y="317.2" text-anchor="middle" font-size="6.4" fill="#bec8cb">Waltham Forest</text><text x="332.7" y="323.0" text-anchor="middle" font-size="6.4" fill="#bec8cb">Redbridge</text><text x="398.6" y="339.8" text-anchor="middle" font-size="6.4" fill="#bec8cb">Havering</text><text x="95.6" y="343.0" text-anchor="middle" font-size="6.4" fill="#bec8cb">Hillingdon</text><text x="175.7" y="343.0" text-anchor="middle" font-size="6.4" fill="#bec8cb">Brent</text><text x="239" y="350.09999999999997" text-anchor="middle" font-size="6.4" fill="#bec8cb">Islington</text><text x="348.8" y="354.0" text-anchor="middle" font-size="6.4" fill="#bec8cb">Barking and Dagenham</text><text x="147.3" y="369.5" text-anchor="middle" font-size="6.4" fill="#bec8cb">Ealing</text><text x="224.8" y="375.3" text-anchor="middle" font-size="6.4" fill="#bec8cb">Westminster</text><text x="193.8" y="389.5" text-anchor="middle" font-size="6.4" fill="#bec8cb">Hammersmith and Fulham</text><text x="87.9" y="402.5" text-anchor="middle" font-size="6.4" fill="#bec8cb">Other / NK</text><text x="131.8" y="409.59999999999997" text-anchor="middle" font-size="6.4" fill="#bec8cb">Hounslow</text><text x="263.6" y="404.4" text-anchor="middle" font-size="6.4" fill="#bec8cb">Southwark</text><text x="323" y="404.4" text-anchor="middle" font-size="6.4" fill="#bec8cb">Greenwich</text><text x="361.8" y="414.09999999999997" text-anchor="middle" font-size="6.4" fill="#bec8cb">Bexley</text><text x="287.5" y="423.8" text-anchor="middle" font-size="6.4" fill="#bec8cb">Lewisham</text><text x="153.7" y="428.3" text-anchor="middle" font-size="6.4" fill="#bec8cb">Richmond upon Thames</text><text x="211.9" y="421.2" text-anchor="middle" font-size="6.4" fill="#bec8cb">Wandsworth</text><text x="208" y="451.59999999999997" text-anchor="middle" font-size="6.4" fill="#bec8cb">Merton</text><text x="166.7" y="467.09999999999997" text-anchor="middle" font-size="6.4" fill="#bec8cb">Kingston upon Thames</text><text x="216.4" y="486.4" text-anchor="middle" font-size="6.4" fill="#bec8cb">Sutton</text><text x="257.1" y="491.59999999999997" text-anchor="middle" font-size="6.4" fill="#bec8cb">Croydon</text><text x="321.7" y="480.0" text-anchor="middle" font-size="6.4" fill="#bec8cb">Bromley</text><path d="M261.4,377.1 C261.5,376.3 262.8,375.5 262.9,374.2 C263.0,372.9 261.9,371.2 261.9,369.3 C261.9,367.4 262.2,364.1 262.9,362.5 C263.6,360.9 265.2,360.4 266.3,359.6 C267.4,358.8 267.9,358.2 269.2,357.7 C270.5,357.2 272.5,357.2 274.1,356.7 C275.7,356.2 277.7,355.5 279.0,354.7 C280.3,353.9 280.8,352.4 281.9,351.8 C283.0,351.2 284.4,351.3 285.8,351.3 C287.2,351.3 289.6,351.1 290.1,351.8 C290.6,352.5 288.6,354.4 288.7,355.7 C288.8,357.0 289.8,358.3 290.6,359.6 C291.4,360.9 293.0,362.2 293.6,363.5 C294.2,364.8 293.2,365.9 294.0,367.4 C294.8,368.9 297.2,370.8 298.4,372.3 C299.6,373.8 301.1,375.1 301.3,376.2 C301.5,377.3 300.3,378.1 299.4,379.1 C298.5,380.1 296.3,380.7 296.0,382.0 C295.7,383.3 297.3,385.3 297.4,386.9 C297.5,388.5 297.3,390.4 296.5,391.7 C295.7,393.0 294.1,394.4 292.6,394.7 C291.1,395.0 289.0,394.7 287.7,393.7 C286.4,392.7 285.4,390.9 284.8,388.8 C284.2,386.7 284.6,382.9 283.8,381.0 C283.0,379.1 281.4,377.6 279.9,377.1 C278.4,376.6 276.6,377.3 275.0,378.1 C273.4,378.9 271.8,381.5 270.2,382.0 C268.6,382.5 266.6,381.5 265.3,381.0 C264.0,380.5 263.0,379.8 262.4,379.1 C261.8,378.5 261.3,377.9 261.4,377.1Z" fill="#1f6db3" stroke="#2b3a4a" stroke-width="0.9"/><text x="281.7" y="374.8" text-anchor="middle" font-size="6.6" fill="#1b1b1b">Tower Hamlets</text><line x1="530.5" y1="246.4" x2="1017" y2="246.4" stroke="#efefef" stroke-width="1"/><text x="526.5" y="248.9" text-anchor="end" font-size="7" fill="#a0a0a0">400</text><line x1="530.5" y1="271.2" x2="1017" y2="271.2" stroke="#efefef" stroke-width="1"/><text x="526.5" y="273.7" text-anchor="end" font-size="7" fill="#a0a0a0">300</text><line x1="530.5" y1="296.0" x2="1017" y2="296.0" stroke="#efefef" stroke-width="1"/><text x="526.5" y="298.5" text-anchor="end" font-size="7" fill="#a0a0a0">200</text><line x1="530.5" y1="320.8" x2="1017" y2="320.8" stroke="#efefef" stroke-width="1"/><text x="526.5" y="323.3" text-anchor="end" font-size="7" fill="#a0a0a0">100</text><text x="526.5" y="345.3" text-anchor="end" font-size="7" fill="#a0a0a0">0</text><line x1="530.5" y1="228" x2="530.5" y2="347.5" stroke="#eeeeee" stroke-width="1"/><line x1="530.5" y1="347.5" x2="1017" y2="347.5" stroke="#eeeeee" stroke-width="1"/><line x1="530.2" y1="347.5" x2="530.2" y2="350" stroke="#ececec" stroke-width="0.8"/><line x1="540.4" y1="347.5" x2="540.4" y2="350" stroke="#ececec" stroke-width="0.8"/><line x1="550.5" y1="347.5" x2="550.5" y2="350" stroke="#ececec" stroke-width="0.8"/><line x1="560.7" y1="347.5" x2="560.7" y2="350" stroke="#ececec" stroke-width="0.8"/><line x1="570.9" y1="347.5" x2="570.9" y2="350" stroke="#ececec" stroke-width="0.8"/><line x1="581.0" y1="347.5" x2="581.0" y2="350" stroke="#ececec" stroke-width="0.8"/><line x1="591.2" y1="347.5" x2="591.2" y2="350" stroke="#ececec" stroke-width="0.8"/><line x1="601.4" y1="347.5" x2="601.4" y2="350" stroke="#ececec" stroke-width="0.8"/><line x1="611.5" y1="347.5" x2="611.5" y2="350" stroke="#ececec" stroke-width="0.8"/><line x1="621.7" y1="347.5" x2="621.7" y2="350" stroke="#ececec" stroke-width="0.8"/><line x1="631.9" y1="347.5" x2="631.9" y2="350" stroke="#ececec" stroke-width="0.8"/><line x1="642.0" y1="347.5" x2="642.0" y2="350" stroke="#ececec" stroke-width="0.8"/><line x1="652.2" y1="347.5" x2="652.2" y2="350" stroke="#ececec" stroke-width="0.8"/><line x1="662.4" y1="347.5" x2="662.4" y2="350" stroke="#ececec" stroke-width="0.8"/><line x1="672.5" y1="347.5" x2="672.5" y2="350" stroke="#ececec" stroke-width="0.8"/><line x1="682.7" y1="347.5" x2="682.7" y2="350" stroke="#ececec" stroke-width="0.8"/><line x1="692.9" y1="347.5" x2="692.9" y2="350" stroke="#ececec" stroke-width="0.8"/><line x1="703.0" y1="347.5" x2="703.0" y2="350" stroke="#ececec" stroke-width="0.8"/><line x1="713.2" y1="347.5" x2="713.2" y2="350" stroke="#ececec" stroke-width="0.8"/><line x1="723.4" y1="347.5" x2="723.4" y2="350" stroke="#ececec" stroke-width="0.8"/><line x1="733.5" y1="347.5" x2="733.5" y2="350" stroke="#ececec" stroke-width="0.8"/><line x1="743.7" y1="347.5" x2="743.7" y2="350" stroke="#ececec" stroke-width="0.8"/><line x1="753.9" y1="347.5" x2="753.9" y2="350" stroke="#ececec" stroke-width="0.8"/><line x1="764.0" y1="347.5" x2="764.0" y2="350" stroke="#ececec" stroke-width="0.8"/><line x1="774.2" y1="347.5" x2="774.2" y2="350" stroke="#ececec" stroke-width="0.8"/><line x1="784.4" y1="347.5" x2="784.4" y2="350" stroke="#ececec" stroke-width="0.8"/><line x1="794.5" y1="347.5" x2="794.5" y2="350" stroke="#ececec" stroke-width="0.8"/><line x1="804.7" y1="347.5" x2="804.7" y2="350" stroke="#ececec" stroke-width="0.8"/><line x1="814.9" y1="347.5" x2="814.9" y2="350" stroke="#ececec" stroke-width="0.8"/><line x1="825.0" y1="347.5" x2="825.0" y2="350" stroke="#ececec" stroke-width="0.8"/><line x1="835.2" y1="347.5" x2="835.2" y2="350" stroke="#ececec" stroke-width="0.8"/><line x1="845.4" y1="347.5" x2="845.4" y2="350" stroke="#ececec" stroke-width="0.8"/><line x1="855.5" y1="347.5" x2="855.5" y2="350" stroke="#ececec" stroke-width="0.8"/><line x1="865.7" y1="347.5" x2="865.7" y2="350" stroke="#ececec" stroke-width="0.8"/><line x1="875.9" y1="347.5" x2="875.9" y2="350" stroke="#ececec" stroke-width="0.8"/><line x1="886.0" y1="347.5" x2="886.0" y2="350" stroke="#ececec" stroke-width="0.8"/><line x1="896.2" y1="347.5" x2="896.2" y2="350" stroke="#ececec" stroke-width="0.8"/><line x1="906.4" y1="347.5" x2="906.4" y2="350" stroke="#ececec" stroke-width="0.8"/><line x1="916.5" y1="347.5" x2="916.5" y2="350" stroke="#ececec" stroke-width="0.8"/><line x1="926.7" y1="347.5" x2="926.7" y2="350" stroke="#ececec" stroke-width="0.8"/><line x1="936.9" y1="347.5" x2="936.9" y2="350" stroke="#ececec" stroke-width="0.8"/><line x1="947.0" y1="347.5" x2="947.0" y2="350" stroke="#ececec" stroke-width="0.8"/><line x1="957.2" y1="347.5" x2="957.2" y2="350" stroke="#ececec" stroke-width="0.8"/><line x1="967.4" y1="347.5" x2="967.4" y2="350" stroke="#ececec" stroke-width="0.8"/><line x1="977.5" y1="347.5" x2="977.5" y2="350" stroke="#ececec" stroke-width="0.8"/><line x1="987.7" y1="347.5" x2="987.7" y2="350" stroke="#ececec" stroke-width="0.8"/><line x1="997.9" y1="347.5" x2="997.9" y2="350" stroke="#ececec" stroke-width="0.8"/><line x1="1008.0" y1="347.5" x2="1008.0" y2="350" stroke="#ececec" stroke-width="0.8"/><line x1="1018.2" y1="347.5" x2="1018.2" y2="350" stroke="#ececec" stroke-width="0.8"/><line x1="530.5" y1="260.5" x2="1017" y2="260.5" stroke="#8a8a8a" stroke-width="0.9" stroke-dasharray="1.3,2.6"/><polyline points="535.3,256.0 545.5,270.6 555.6,262.3 565.8,273.8 576.0,260.2 586.1,252.8 596.3,262.7 606.5,269.6 616.6,254.3 626.8,258.1 637.0,278.2 647.1,255.1 657.3,258.1 667.5,271.6 677.6,256.3 687.8,265.1 698.0,256.9 708.1,255.3 718.3,255.6 728.5,251.1 738.6,255.1 748.8,263.2 759.0,259.1 769.1,261.0 779.3,250.5 789.4,252.2 799.6,267.4 809.8,269.3 819.9,277.3 830.1,268.7 840.3,259.1 850.4,270.3 860.6,256.6 870.8,259.1 880.9,260.2 891.1,266.3 901.3,266.3 911.4,273.3 921.6,262.5 931.8,261.0 941.9,254.9 952.1,263.8 962.3,258.0 972.4,265.4 982.6,234.5 992.8,246.9 1002.9,257.8 1013.1,257.0" fill="none" stroke="#4e76a8" stroke-width="1.8" stroke-linejoin="round"/><circle cx="535.3" cy="256.0" r="1.8" fill="#4e76a8"/><circle cx="545.5" cy="270.6" r="1.8" fill="#4e76a8"/><circle cx="555.6" cy="262.3" r="1.8" fill="#4e76a8"/><circle cx="565.8" cy="273.8" r="1.8" fill="#4e76a8"/><circle cx="576.0" cy="260.2" r="1.8" fill="#4e76a8"/><circle cx="586.1" cy="252.8" r="1.8" fill="#4e76a8"/><circle cx="596.3" cy="262.7" r="1.8" fill="#4e76a8"/><circle cx="606.5" cy="269.6" r="1.8" fill="#4e76a8"/><circle cx="616.6" cy="254.3" r="1.8" fill="#4e76a8"/><circle cx="626.8" cy="258.1" r="1.8" fill="#4e76a8"/><circle cx="637.0" cy="278.2" r="1.8" fill="#4e76a8"/><circle cx="647.1" cy="255.1" r="1.8" fill="#4e76a8"/><circle cx="657.3" cy="258.1" r="1.8" fill="#4e76a8"/><circle cx="667.5" cy="271.6" r="1.8" fill="#4e76a8"/><circle cx="677.6" cy="256.3" r="1.8" fill="#4e76a8"/><circle cx="687.8" cy="265.1" r="1.8" fill="#4e76a8"/><circle cx="698.0" cy="256.9" r="1.8" fill="#4e76a8"/><circle cx="708.1" cy="255.3" r="1.8" fill="#4e76a8"/><circle cx="718.3" cy="255.6" r="1.8" fill="#4e76a8"/><circle cx="728.5" cy="251.1" r="1.8" fill="#4e76a8"/><circle cx="738.6" cy="255.1" r="1.8" fill="#4e76a8"/><circle cx="748.8" cy="263.2" r="1.8" fill="#4e76a8"/><circle cx="759.0" cy="259.1" r="1.8" fill="#4e76a8"/><circle cx="769.1" cy="261.0" r="1.8" fill="#4e76a8"/><circle cx="779.3" cy="250.5" r="1.8" fill="#4e76a8"/><circle cx="789.4" cy="252.2" r="1.8" fill="#4e76a8"/><circle cx="799.6" cy="267.4" r="1.8" fill="#4e76a8"/><circle cx="809.8" cy="269.3" r="1.8" fill="#4e76a8"/><circle cx="819.9" cy="277.3" r="1.8" fill="#4e76a8"/><circle cx="830.1" cy="268.7" r="1.8" fill="#4e76a8"/><circle cx="840.3" cy="259.1" r="1.8" fill="#4e76a8"/><circle cx="850.4" cy="270.3" r="1.8" fill="#4e76a8"/><circle cx="860.6" cy="256.6" r="1.8" fill="#4e76a8"/><circle cx="870.8" cy="259.1" r="1.8" fill="#4e76a8"/><circle cx="880.9" cy="260.2" r="1.8" fill="#4e76a8"/><circle cx="891.1" cy="266.3" r="1.8" fill="#4e76a8"/><circle cx="901.3" cy="266.3" r="1.8" fill="#4e76a8"/><circle cx="911.4" cy="273.3" r="1.8" fill="#4e76a8"/><circle cx="921.6" cy="262.5" r="1.8" fill="#4e76a8"/><circle cx="931.8" cy="261.0" r="1.8" fill="#4e76a8"/><circle cx="941.9" cy="254.9" r="1.8" fill="#4e76a8"/><circle cx="952.1" cy="263.8" r="1.8" fill="#4e76a8"/><circle cx="962.3" cy="258.0" r="1.8" fill="#4e76a8"/><circle cx="972.4" cy="265.4" r="1.8" fill="#4e76a8"/><circle cx="982.6" cy="234.5" r="1.8" fill="#4e76a8"/><circle cx="992.8" cy="246.9" r="1.8" fill="#4e76a8"/><circle cx="1002.9" cy="257.8" r="1.8" fill="#4e76a8"/><circle cx="1013.1" cy="257.0" r="1.8" fill="#4e76a8"/><rect x="752" y="249.5" width="44" height="12" fill="#ffffff" fill-opacity="0.55"/><text x="753.5" y="258.3" font-size="7" fill="#8f8f8f">Average:343</text><text x="530.3" y="265.6" font-size="6.8" fill="#555">361</text><text x="1005.8" y="267.2" font-size="6.8" fill="#555">357</text><text transform="translate(537.7,350.5) rotate(-90)" text-anchor="end" font-size="6.75" fill="#8a8a8a">Nov 2021</text><text transform="translate(547.9,350.5) rotate(-90)" text-anchor="end" font-size="6.75" fill="#8a8a8a">Dec 2021</text><text transform="translate(558.0,350.5) rotate(-90)" text-anchor="end" font-size="6.75" fill="#8a8a8a">Jan 2022</text><text transform="translate(568.2,350.5) rotate(-90)" text-anchor="end" font-size="6.75" fill="#8a8a8a">Feb 2022</text><text transform="translate(578.4,350.5) rotate(-90)" text-anchor="end" font-size="6.75" fill="#8a8a8a">Mar 2022</text><text transform="translate(588.5,350.5) rotate(-90)" text-anchor="end" font-size="6.75" fill="#8a8a8a">Apr 2022</text><text transform="translate(598.7,350.5) rotate(-90)" text-anchor="end" font-size="6.75" fill="#8a8a8a">May 2022</text><text transform="translate(608.9,350.5) rotate(-90)" text-anchor="end" font-size="6.75" fill="#8a8a8a">Jun 2022</text><text transform="translate(619.0,350.5) rotate(-90)" text-anchor="end" font-size="6.75" fill="#8a8a8a">Jul 2022</text><text transform="translate(629.2,350.5) rotate(-90)" text-anchor="end" font-size="6.75" fill="#8a8a8a">Aug 2022</text><text transform="translate(639.4,350.5) rotate(-90)" text-anchor="end" font-size="6.75" fill="#8a8a8a">Sept 2022</text><text transform="translate(649.5,350.5) rotate(-90)" text-anchor="end" font-size="6.75" fill="#8a8a8a">Oct 2022</text><text transform="translate(659.7,350.5) rotate(-90)" text-anchor="end" font-size="6.75" fill="#8a8a8a">Nov 2022</text><text transform="translate(669.9,350.5) rotate(-90)" text-anchor="end" font-size="6.75" fill="#8a8a8a">Dec 2022</text><text transform="translate(680.0,350.5) rotate(-90)" text-anchor="end" font-size="6.75" fill="#8a8a8a">Jan 2023</text><text transform="translate(690.2,350.5) rotate(-90)" text-anchor="end" font-size="6.75" fill="#8a8a8a">Feb 2023</text><text transform="translate(700.4,350.5) rotate(-90)" text-anchor="end" font-size="6.75" fill="#8a8a8a">Mar 2023</text><text transform="translate(710.5,350.5) rotate(-90)" text-anchor="end" font-size="6.75" fill="#8a8a8a">Apr 2023</text><text transform="translate(720.7,350.5) rotate(-90)" text-anchor="end" font-size="6.75" fill="#8a8a8a">May 2023</text><text transform="translate(730.9,350.5) rotate(-90)" text-anchor="end" font-size="6.75" fill="#8a8a8a">Jun 2023</text><text transform="translate(741.0,350.5) rotate(-90)" text-anchor="end" font-size="6.75" fill="#8a8a8a">Jul 2023</text><text transform="translate(751.2,350.5) rotate(-90)" text-anchor="end" font-size="6.75" fill="#8a8a8a">Aug 2023</text><text transform="translate(761.4,350.5) rotate(-90)" text-anchor="end" font-size="6.75" fill="#8a8a8a">Sept 2023</text><text transform="translate(771.5,350.5) rotate(-90)" text-anchor="end" font-size="6.75" fill="#8a8a8a">Oct 2023</text><text transform="translate(781.7,350.5) rotate(-90)" text-anchor="end" font-size="6.75" fill="#8a8a8a">Nov 2023</text><text transform="translate(791.8,350.5) rotate(-90)" text-anchor="end" font-size="6.75" fill="#8a8a8a">Dec 2023</text><text transform="translate(802.0,350.5) rotate(-90)" text-anchor="end" font-size="6.75" fill="#8a8a8a">Jan 2024</text><text transform="translate(812.2,350.5) rotate(-90)" text-anchor="end" font-size="6.75" fill="#8a8a8a">Feb 2024</text><text transform="translate(822.3,350.5) rotate(-90)" text-anchor="end" font-size="6.75" fill="#8a8a8a">Mar 2024</text><text transform="translate(832.5,350.5) rotate(-90)" text-anchor="end" font-size="6.75" fill="#8a8a8a">Apr 2024</text><text transform="translate(842.7,350.5) rotate(-90)" text-anchor="end" font-size="6.75" fill="#8a8a8a">May 2024</text><text transform="translate(852.8,350.5) rotate(-90)" text-anchor="end" font-size="6.75" fill="#8a8a8a">Jun 2024</text><text transform="translate(863.0,350.5) rotate(-90)" text-anchor="end" font-size="6.75" fill="#8a8a8a">Jul 2024</text><text transform="translate(873.2,350.5) rotate(-90)" text-anchor="end" font-size="6.75" fill="#8a8a8a">Aug 2024</text><text transform="translate(883.3,350.5) rotate(-90)" text-anchor="end" font-size="6.75" fill="#8a8a8a">Sept 2024</text><text transform="translate(893.5,350.5) rotate(-90)" text-anchor="end" font-size="6.75" fill="#8a8a8a">Oct 2024</text><text transform="translate(903.7,350.5) rotate(-90)" text-anchor="end" font-size="6.75" fill="#8a8a8a">Nov 2024</text><text transform="translate(913.8,350.5) rotate(-90)" text-anchor="end" font-size="6.75" fill="#8a8a8a">Dec 2024</text><text transform="translate(924.0,350.5) rotate(-90)" text-anchor="end" font-size="6.75" fill="#8a8a8a">Jan 2025</text><text transform="translate(934.2,350.5) rotate(-90)" text-anchor="end" font-size="6.75" fill="#8a8a8a">Feb 2025</text><text transform="translate(944.3,350.5) rotate(-90)" text-anchor="end" font-size="6.75" fill="#8a8a8a">Mar 2025</text><text transform="translate(954.5,350.5) rotate(-90)" text-anchor="end" font-size="6.75" fill="#8a8a8a">Apr 2025</text><text transform="translate(964.7,350.5) rotate(-90)" text-anchor="end" font-size="6.75" fill="#8a8a8a">May 2025</text><text transform="translate(974.8,350.5) rotate(-90)" text-anchor="end" font-size="6.75" fill="#8a8a8a">Jun 2025</text><text transform="translate(985.0,350.5) rotate(-90)" text-anchor="end" font-size="6.75" fill="#8a8a8a">Jul 2025</text><text transform="translate(995.2,350.5) rotate(-90)" text-anchor="end" font-size="6.75" fill="#8a8a8a">Aug 2025</text><text transform="translate(1005.3,350.5) rotate(-90)" text-anchor="end" font-size="6.75" fill="#8a8a8a">Sept 2025</text><text transform="translate(1015.5,350.5) rotate(-90)" text-anchor="end" font-size="6.75" fill="#8a8a8a">Oct 2025</text><line x1="514" y1="417.3" x2="1018" y2="417.3" stroke="#e3e3e3" stroke-width="1"/><line x1="514" y1="480.4" x2="1018" y2="480.4" stroke="#e3e3e3" stroke-width="1"/><line x1="514" y1="543.6" x2="1018" y2="543.6" stroke="#e3e3e3" stroke-width="1"/><line x1="1017.7" y1="417.3" x2="1017.7" y2="543.6" stroke="#e3e3e3" stroke-width="1"/><line x1="643.5" y1="417.3" x2="643.5" y2="543.6" stroke="#e3e3e3" stroke-width="1"/><rect x="643.5" y="424.9" width="356.3" height="47.3" fill="#4e77a5"/><rect x="643.5" y="488" width="81" height="47.2" fill="#78b5ae"/><text x="686" y="409.6" font-size="9.6" fill="#7a7a7a" textLength="159.5">What are the volumes by Offence Type?</text><text x="517" y="451.6" font-size="6.9" fill="#8a8a8a">Domestic Abuse</text><text x="603.5" y="451.6" font-size="6.9" fill="#8a8a8a">16,410</text><text x="517" y="510" font-size="6.9" fill="#8a8a8a">Domestic Abuse violence</text><text x="517" y="520" font-size="6.9" fill="#8a8a8a">with injury</text><text x="603.5" y="515" font-size="6.9" fill="#8a8a8a">3,738</text><text x="644.6" y="555.2" font-size="6.9" fill="#a0a0a0">0K</text><line x1="665.3" y1="543.6" x2="665.3" y2="546" stroke="#e3e3e3" stroke-width="1"/><text x="665.3" y="555.2" text-anchor="middle" font-size="6.9" fill="#a0a0a0">1K</text><line x1="687.1" y1="543.6" x2="687.1" y2="546" stroke="#e3e3e3" stroke-width="1"/><text x="687.1" y="555.2" text-anchor="middle" font-size="6.9" fill="#a0a0a0">2K</text><line x1="708.9" y1="543.6" x2="708.9" y2="546" stroke="#e3e3e3" stroke-width="1"/><text x="708.9" y="555.2" text-anchor="middle" font-size="6.9" fill="#a0a0a0">3K</text><line x1="730.7" y1="543.6" x2="730.7" y2="546" stroke="#e3e3e3" stroke-width="1"/><text x="730.7" y="555.2" text-anchor="middle" font-size="6.9" fill="#a0a0a0">4K</text><line x1="752.5" y1="543.6" x2="752.5" y2="546" stroke="#e3e3e3" stroke-width="1"/><text x="752.5" y="555.2" text-anchor="middle" font-size="6.9" fill="#a0a0a0">5K</text><line x1="774.3" y1="543.6" x2="774.3" y2="546" stroke="#e3e3e3" stroke-width="1"/><text x="774.3" y="555.2" text-anchor="middle" font-size="6.9" fill="#a0a0a0">6K</text><line x1="796.1" y1="543.6" x2="796.1" y2="546" stroke="#e3e3e3" stroke-width="1"/><text x="796.1" y="555.2" text-anchor="middle" font-size="6.9" fill="#a0a0a0">7K</text><line x1="817.9" y1="543.6" x2="817.9" y2="546" stroke="#e3e3e3" stroke-width="1"/><text x="817.9" y="555.2" text-anchor="middle" font-size="6.9" fill="#a0a0a0">8K</text><line x1="839.7" y1="543.6" x2="839.7" y2="546" stroke="#e3e3e3" stroke-width="1"/><text x="839.7" y="555.2" text-anchor="middle" font-size="6.9" fill="#a0a0a0">9K</text><line x1="861.5" y1="543.6" x2="861.5" y2="546" stroke="#e3e3e3" stroke-width="1"/><text x="861.5" y="555.2" text-anchor="middle" font-size="6.9" fill="#a0a0a0">10K</text><line x1="883.3" y1="543.6" x2="883.3" y2="546" stroke="#e3e3e3" stroke-width="1"/><text x="883.3" y="555.2" text-anchor="middle" font-size="6.9" fill="#a0a0a0">11K</text><line x1="905.1" y1="543.6" x2="905.1" y2="546" stroke="#e3e3e3" stroke-width="1"/><text x="905.1" y="555.2" text-anchor="middle" font-size="6.9" fill="#a0a0a0">12K</text><line x1="926.9" y1="543.6" x2="926.9" y2="546" stroke="#e3e3e3" stroke-width="1"/><text x="926.9" y="555.2" text-anchor="middle" font-size="6.9" fill="#a0a0a0">13K</text><line x1="948.7" y1="543.6" x2="948.7" y2="546" stroke="#e3e3e3" stroke-width="1"/><text x="948.7" y="555.2" text-anchor="middle" font-size="6.9" fill="#a0a0a0">14K</text><line x1="970.5" y1="543.6" x2="970.5" y2="546" stroke="#e3e3e3" stroke-width="1"/><text x="970.5" y="555.2" text-anchor="middle" font-size="6.9" fill="#a0a0a0">15K</text><line x1="992.3" y1="543.6" x2="992.3" y2="546" stroke="#e3e3e3" stroke-width="1"/><text x="992.3" y="555.2" text-anchor="middle" font-size="6.9" fill="#a0a0a0">16K</text><text x="1016" y="555.2" text-anchor="end" font-size="6.9" fill="#a0a0a0">17K</text></svg>
</body></html>
